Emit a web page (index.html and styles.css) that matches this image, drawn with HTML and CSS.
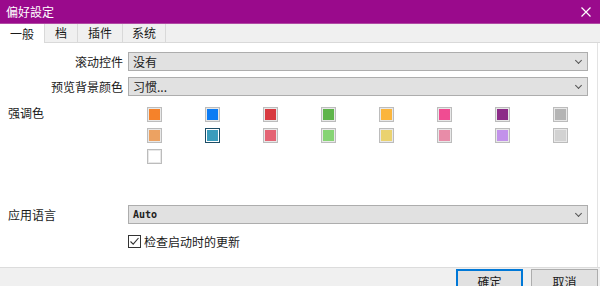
FILE: index.html
```html
<!DOCTYPE html>
<html lang="zh">
<head>
    <meta charset="UTF-8">
    <meta name="viewport" content="width=device-width, initial-scale=1.0">
    <title>偏好設定</title>
    <link rel="stylesheet" href="styles.css">
</head>
<body>
    <div class="window">
        <div class="titlebar">
            <span class="title">偏好設定</span>
            <svg class="close" width="10" height="10" viewBox="0 0 10 10">
                <path d="M0.5 0.5 L9.5 9.5 M9.5 0.5 L0.5 9.5" stroke="#fff" stroke-width="1.2" fill="none"/>
            </svg>
        </div>

        <div class="tabs">
            <div class="tab active">一般</div>
            <div class="tab">档</div>
            <div class="tab">插件</div>
            <div class="tab">系统</div>
        </div>

        <div class="panel">
            <div class="row">
                <div class="row-label">滚动控件</div>
                <div class="select"><span>没有</span><i class="chevron"></i></div>
            </div>
            <div class="row">
                <div class="row-label">预览背景颜色</div>
                <div class="select"><span>习惯...</span><i class="chevron"></i></div>
            </div>

            <div class="accent">
                <div class="accent-label">强调色</div>
                <div class="swatches">
                    <div class="swatch" style="background:#f5822a"></div>
                    <div class="swatch" style="background:#0c7cf4"></div>
                    <div class="swatch" style="background:#d83a40"></div>
                    <div class="swatch" style="background:#5eb44a"></div>
                    <div class="swatch" style="background:#fbb53c"></div>
                    <div class="swatch" style="background:#f04c92"></div>
                    <div class="swatch" style="background:#8c2c88"></div>
                    <div class="swatch" style="background:#b4b4b4"></div>
                    <div class="swatch" style="background:#eca262"></div>
                    <div class="swatch selected" style="background:#3a9cbc"></div>
                    <div class="swatch" style="background:#e46474"></div>
                    <div class="swatch" style="background:#86d474"></div>
                    <div class="swatch" style="background:#ead270"></div>
                    <div class="swatch" style="background:#e88ca8"></div>
                    <div class="swatch" style="background:#c292ea"></div>
                    <div class="swatch" style="background:#d2d2d2"></div>
                    <div class="swatch" style="background:#ffffff"></div>
                </div>
            </div>

            <div class="row lang">
                <div class="row-label left">应用语言</div>
                <div class="select"><span class="mono">Auto</span><i class="chevron"></i></div>
            </div>

            <label class="check">
                <span class="box">
                    <svg width="11" height="11" viewBox="0 0 11 11">
                        <path d="M1.5 5.5 L4.2 8.2 L9.5 2" stroke="#333" stroke-width="1.1" fill="none"/>
                    </svg>
                </span>
                检查启动时的更新
            </label>
        </div>

        <div class="footer">
            <button class="btn primary">確定</button>
            <button class="btn">取消</button>
        </div>
    </div>
</body>
</html>
```

FILE: styles.css
```css
body{
    margin: 0;
    font-family: "Noto Sans CJK SC", "Noto Sans CJK TC", sans-serif;
    font-size: 12px;
    color: #1a1a1a;
    background-color: #ffffff;
}
.window{
    width: 600px;
    height: 286px;
    overflow: hidden;
    display: flex;
    flex-direction: column;
}
.titlebar{
    height: 24px;
    flex-shrink: 0;
    background-color: #9a0a8c;
    border-bottom: 1px solid #b04aa4;
    box-sizing: border-box;
    display: flex;
    align-items: center;
    justify-content: space-between;
    padding: 0 9px 0 6px;
    color: #ffffff;
}
.title{
    font-size: 12px;
    line-height: 1;
}
.close{
    display: block;
    margin-top: 0px;
}
.tabs{
    height: 19px;
    flex-shrink: 0;
    display: flex;
    background-color: #f0f0f0;
    border-bottom: 1px solid #d9d9d9;
    box-sizing: border-box;
}
.tab{
    display: flex;
    align-items: center;
    justify-content: center;
    padding: 0 10px;
    border-right: 1px solid #d9d9d9;
    line-height: 1;
}
.tab:nth-child(1){ width: 45px; padding: 0; box-sizing: border-box; }
.tab:nth-child(2){ width: 33px; padding: 0; box-sizing: border-box; }
.tab:nth-child(3){ width: 45px; padding: 0; box-sizing: border-box; }
.tab:nth-child(4){ width: 43px; padding: 0; box-sizing: border-box; }
.tab.active{
    background-color: #ffffff;
    margin-bottom: -1px;
}
.panel{
    height: 224px;
    flex-shrink: 0;
    width: 598px;
    box-sizing: border-box;
    border-right: 1px solid #e3e3e3;
    padding-top: 9px;
    display: flex;
    flex-direction: column;
}
.row{
    display: flex;
    align-items: center;
    height: 19px;
    margin-bottom: 6px;
}
.row-label{
    width: 128px;
    padding-right: 5px;
    box-sizing: border-box;
    text-align: right;
    flex-shrink: 0;
}
.row-label.left{
    text-align: left;
    padding-left: 8px;
}
.select{
    width: 460px;
    height: 19px;
    box-sizing: border-box;
    background-color: #e1e1e1;
    border: 1px solid #adadad;
    display: flex;
    align-items: center;
    justify-content: space-between;
    padding: 0 6px 0 4px;
    line-height: 1;
}
.chevron{
    width: 4px;
    height: 4px;
    border-right: 1px solid #555;
    border-bottom: 1px solid #555;
    transform: rotate(45deg);
    margin-top: -3px;
}
.mono{
    font-family: "DejaVu Sans Mono", monospace;
    font-size: 10px;
    font-weight: bold;
    color: #222;
}
.accent{
    display: flex;
    margin-top: 5px;
}
.accent-label{
    width: 147px;
    padding-left: 8px;
    box-sizing: border-box;
    flex-shrink: 0;
    line-height: 1;
    padding-top: 0px;
}
.swatches{
    display: grid;
    grid-template-columns: repeat(8, 15px);
    grid-auto-rows: 15px;
    column-gap: 43px;
    row-gap: 6px;
}
.swatch{
    width: 15px;
    height: 15px;
    box-sizing: border-box;
    border: 1px solid #bcbcbc;
    box-shadow: inset 0 0 0 1px #e8e8e8;
}
.swatch.selected{
    border-color: #1d4d66;
    box-shadow: inset 0 0 0 1px #ffffff;
}
.lang{
    margin-top: 41px;
    margin-bottom: 11px;
}
.check{
    display: flex;
    align-items: center;
    padding-left: 128px;
    line-height: 1;
}
.box{
    width: 13px;
    height: 13px;
    box-sizing: border-box;
    border: 1px solid #333;
    background-color: #fff;
    display: flex;
    align-items: center;
    justify-content: center;
    margin-right: 3px;
}
.box svg{
    display: block;
}
.footer{
    flex: 1;
    background-color: #f0f0f0;
    border-top: 1px solid #dcdcdc;
    display: flex;
    justify-content: flex-end;
    align-items: flex-start;
    padding: 1px 2px 0 0;
    gap: 8px;
}
.btn{
    width: 67px;
    height: 24px;
    font-family: "Noto Sans CJK TC", "Noto Sans CJK SC", sans-serif;
    font-size: 12px;
    background-color: #e1e1e1;
    border: 1px solid #adadad;
    padding: 0;
    color: #1a1a1a;
}
.btn.primary{
    border: 2px solid #0078d7;
}
```
